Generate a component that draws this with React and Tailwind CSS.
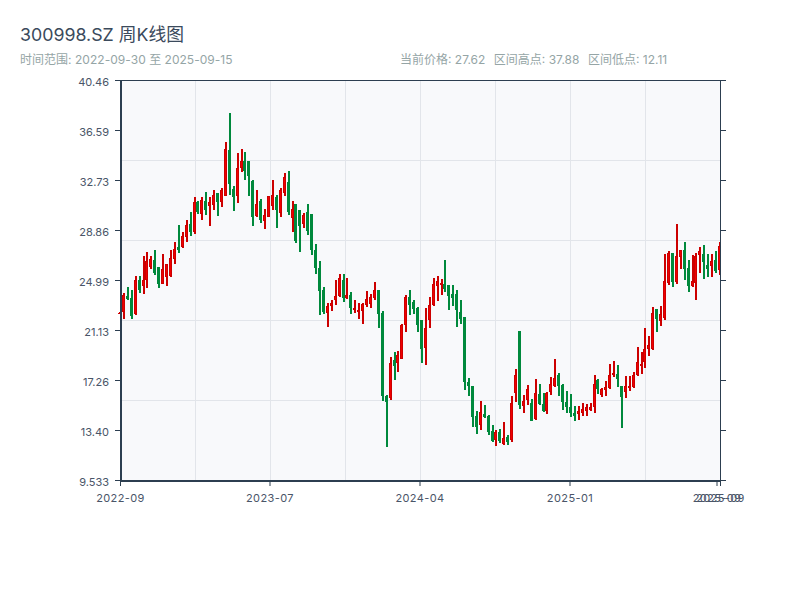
const raw = `312,314,312.5,313.5,r 293,319,295,312,r 287,300,296,299,g 290,319,298,316,g 276,315,280,314,r 276,293,280,290,g 256,294,280,286,r 252,288,261,280,r 256,269,259,267,r 250,275,260,273,g 267,288,267,284,g 254,284,269,284,r 264,286,264,277,r 250,277,258,276,r 242,264,249,259,r 225,253,247,250,g 232,248,236,247,r 220,242,225,237,r 212,236,224,232,g 197,234,202,232,r 201,214,202,212,g 197,220,200,214,r 192,215,201,210,g 197,226,202,206,r 190,210,195,205,r 193,216,193,202,g 188,207,190,202,r 142,196,149,196,r 113,195,150,184,g 186,211,189,197,g 153,203,168,196,r 149,172,161,168,r 152,180,161,171,g 161,196,161,176,g 180,226,181,217,g 190,217,204,216,r 199,223,201,220,g 209,229,215,221,r 196,217,196,217,r 180,210,195,206,r 195,228,197,210,g 188,217,190,213,r 173,196,177,193,r 171,215,182,212,g 201,232,209,218,r 204,243,204,241,g 210,252,210,226,g 213,228,215,224,r 204,235,212,231,g 214,255,214,250,g 244,274,250,268,g 261,315,268,291,g 287,314,290,312,g 303,327,306,313,r 300,311,303,306,r 280,305,296,300,r 274,297,278,296,r 274,302,280,298,g 278,299,295,298,r 292,314,295,308,g 300,313,308,310,r 303,319,310,312,r 303,324,304,311,r 291,307,299,305,r 294,308,297,304,r 282,300,290,298,r 290,328,290,314,g 311,401,313,396,g 395,447,396,402,g 357,400,363,398,r 352,380,360,366,g 351,372,355,363,r 324,359,325,359,r 295,332,297,325,r 290,315,297,305,g 300,314,302,309,g 307,332,308,325,g 320,363,320,349,g 308,365,328,348,r 297,328,305,320,r 278,306,284,305,r 276,301,281,286,r 279,295,283,285,r 260,292,284,289,g 285,310,285,296,g 285,306,294,298,g 290,327,294,310,g 300,324,312,319,g 317,390,317,382,g 378,396,382,386,g 386,427,386,417,g 411,434,416,427,g 401,430,412,425,r 405,418,414,417,g 415,435,416,432,g 425,442,431,441,g 430,446,432,440,r 429,443,432,441,g 422,445,438,444,r 435,445,437,442,g 396,442,403,440,r 369,402,375,393,r 331,409,331,405,g 395,413,401,406,r 385,405,389,400,r 399,421,403,421,g 379,420,393,419,r 384,405,394,404,g 393,412,404,411,g 392,414,393,411,r 377,395,384,392,r 359,387,378,386,r 373,396,375,386,g 384,410,385,402,g 391,413,402,407,g 394,417,407,413,g 406,421,413,416,g 406,420,411,414,r 403,416,409,413,r 404,416,407,411,r 403,411,407,410,r 375,413,384,407,r 379,394,380,389,g 388,397,389,395,r 381,396,387,390,r 364,389,375,388,r 361,377,373,375,r 365,387,374,379,g 386,428,386,397,g 376,398,386,392,r 376,391,386,388,r 372,388,375,387,r 347,376,362,375,r 352,374,364,366,r 328,368,349,362,r 336,356,345,349,r 307,350,313,349,r 309,332,309,319,g 306,326,314,321,r 254,320,281,318,r 251,285,253,283,r 253,287,253,282,g 224,284,256,282,r 250,269,250,257,r 242,280,250,269,g 260,292,268,286,g 255,287,281,286,r 253,300,256,283,r 247,273,251,255,r 245,279,254,262,g 254,277,265,269,g 254,277,261,266,r 251,273,260,271,g 242,275,246,270,r`;
const candles = raw.split(' ').map((s, i) => {
  const [h, l, t, b, c] = s.split(',');
  return { i, h: +h, l: +l, t: +t, b: +b, c };
});
const pitch = 600 / 153;
const yTicks = [
  ['40.46', 80.5],
  ['36.59', 130.5],
  ['32.73', 180.5],
  ['28.86', 230.5],
  ['24.99', 280.5],
  ['21.13', 330.5],
  ['17.26', 380.5],
  ['13.40', 430.5],
  ['9.533', 480.5],
];
const xTicks = [
  ['2022-09', 120.5],
  ['2023-07', 270],
  ['2024-04', 420],
  ['2025-01', 570],
  ['2025-09', 717],
  ['2025-09', 720.5],
];
const axis = '#2c3e50';
const grid = '#e2e5ea';
function Chart() {
  return (
    <svg width="800" height="452" viewBox="0 70 800 452" className="block" style={{ fontFamily: 'Inter, "Noto Sans CJK SC", sans-serif' }}>
      <rect x="120" y="80" width="600" height="400" fill="#f8f9fb" />
      {[160.5, 240.5, 320.5, 400.5].map((y) => (
        <line key={y} x1="120" x2="720" y1={y} y2={y} stroke={grid} />
      ))}
      {[195.5, 270.5, 345.5, 420.5, 495.5, 570.5, 645.5].map((x) => (
        <line key={x} x1={x} x2={x} y1="80" y2="480" stroke={grid} />
      ))}
      {candles.map((d) => {
        const L = Math.round(120 + d.i * pitch - 2);
        const up = d.c === 'r';
        return (
          <g key={d.i} shapeRendering="crispEdges">
            <rect x={L + 1} y={d.h} width="2" height={d.l - d.h} fill={up ? '#cc0000' : '#00893c'} />
            <rect x={L + 0.5} y={d.t + 0.5} width="2" height={Math.max(d.b - d.t - 1, 0.5)} fill={up ? '#f00000' : '#00893c'} stroke={up ? '#cc0000' : '#00893c'} strokeWidth="1" />
          </g>
        );
      })}
      <rect x="120" y="80" width="2" height="402" fill={axis} />
      <rect x="120" y="480" width="600" height="2" fill={axis} />
      <rect x="720" y="80" width="1" height="402" fill={axis} />
      <rect x="120" y="80" width="600" height="1" fill={axis} />
      {yTicks.map(([t, y]) => (
        <g key={t}>
          <line x1="115" x2="120" y1={y} y2={y} stroke={axis} />
          <line x1="721" x2="726" y1={y} y2={y} stroke={axis} />
          <text x="109" y={y + 5} textAnchor="end" fontSize="11" fill="#4a5568">{t}</text>
        </g>
      ))}
      {xTicks.map(([t, x], n) => (
        <g key={n}>
          <line x1={x} x2={x} y1="482" y2="486" stroke={axis} />
          <text x={x} y="502" textAnchor="middle" fontSize="11" letterSpacing="0.4" fill="#4a5568">{t}</text>
        </g>
      ))}
    </svg>
  );
}
export default function App() {
  return (
    <div className="w-[800px] h-[600px] bg-white font-['Inter','Noto_Sans_CJK_SC',sans-serif]">
      <div className="px-5 pt-[22px] h-[70px]">
        <h1 className="text-[17.8px] leading-[25px] font-normal text-[#3b4a5c]">300998.SZ 周K线图</h1>
        <div className="flex mt-[5px] text-[12px] leading-[16px] text-[#95a5a6]">
          <div className="w-[380px] tracking-[0.03px]">时间范围: 2022-09-30 至 2025-09-15</div>
          <div className="flex gap-[8.5px]">
            <span>当前价格: 27.62</span>
            <span>区间高点: 37.88</span>
            <span>区间低点: 12.11</span>
          </div>
        </div>
      </div>
      <Chart />
    </div>
  );
}
